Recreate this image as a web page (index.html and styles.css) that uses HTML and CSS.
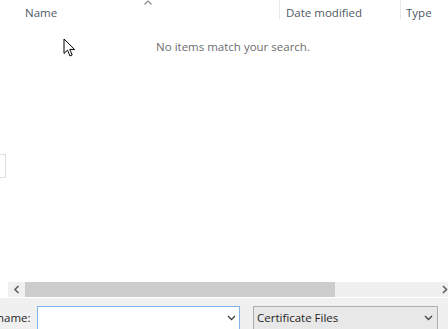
FILE: index.html
```html
<!DOCTYPE html>
<html>
<head>
<meta charset="utf-8">
<link rel="stylesheet" href="styles.css">
</head>
<body>
<div class="window">
  <div class="list">
    <div class="header">
      <div class="col col-name">Name<span class="sort"><svg width="8" height="5" viewBox="0 0 8 5"><path d="M0.5 4.5 L4 1 L7.5 4.5" fill="none" stroke="#8a8a8a" stroke-width="1.2"/></svg></span></div>
      <div class="col col-date">Date modified</div>
      <div class="col col-type">Type</div>
    </div>
    <div class="empty">No items match your search.</div>
    <div class="edge"></div>
    <div class="hscroll">
      <div class="arrow-left"><svg width="7" height="9" viewBox="0 0 7 9"><path d="M5.5 1 L2 4.5 L5.5 8" fill="none" stroke="#606060" stroke-width="1.6"/></svg></div>
      <div class="track"><div class="thumb"></div></div>
      <div class="arrow-right"><svg width="6" height="9" viewBox="0 0 6 9"><path d="M1 1 L4.5 4.5 L1 8" fill="none" stroke="#606060" stroke-width="1.6"/></svg></div>
    </div>
    <svg class="cursor" width="14" height="20" viewBox="0 0 14 20"><path d="M1 1 L1 15.5 L4.5 12.2 L7 18 L9.2 17 L6.8 11.4 L11.5 11.4 Z" fill="#fff" stroke="#000" stroke-width="1" stroke-linejoin="miter"/></svg>
  </div>
  <div class="bottom">
    <span class="label">name:</span>
    <div class="input"><span class="chev"><svg width="9" height="6" viewBox="0 0 9 6"><path d="M1 1 L4.5 4.5 L8 1" fill="none" stroke="#404040" stroke-width="1.3"/></svg></span></div>
    <div class="combo"><span class="combo-text">Certificate Files</span><span class="chev"><svg width="9" height="6" viewBox="0 0 9 6"><path d="M1 1 L4.5 4.5 L8 1" fill="none" stroke="#404040" stroke-width="1.3"/></svg></span></div>
  </div>
</div>
</body>
</html>
```
FILE: styles.css
```css
* { box-sizing: border-box; }
html, body { margin: 0; padding: 0; }
body {
  width: 448px;
  height: 329px;
  overflow: hidden;
  font-family: "Open Sans", "Noto Sans", "Liberation Sans", sans-serif;
  background: #fff;
}
.window {
  width: 448px;
  height: 329px;
  display: flex;
  flex-direction: column;
}
.list {
  position: relative;
  height: 298px;
  flex-shrink: 0;
  background: #fff;
  display: flex;
  flex-direction: column;
}
.header {
  display: flex;
  height: 27px;
  font-size: 11.5px;
  color: #4e5966;
}
.col {
  padding-top: 5px;
  line-height: 16px;
}
.col-name {
  position: relative;
  width: 279px;
  padding-left: 25px;
}
.sort {
  position: absolute;
  left: 144px;
  top: 0px;
  line-height: 0;
}
.col-date {
  width: 121px;
  padding-left: 6px;
  border-left: 1px solid #e8e8e8;
  height: 19px;
}
.col-type {
  flex: 1;
  padding-left: 5px;
  border-left: 1px solid #e8e8e8;
  height: 19px;
}
.empty {
  text-align: center;
  font-size: 11.5px;
  color: #6d6d6d;
  padding-left: 18px;
  margin-top: 12px;
  line-height: 16px;
}
.edge {
  margin-top: 99px;
  width: 6px;
  height: 24px;
  border: 1px solid #e0e0e0;
  border-left: none;
}
.hscroll {
  margin-top: auto;
  margin-bottom: 1px;
  margin-left: 8px;
  height: 15px;
  display: flex;
  background: #f0f0f0;
}
.arrow-left {
  width: 17px;
  display: flex;
  align-items: center;
  justify-content: center;
}
.track {
  flex: 1;
  display: flex;
}
.thumb {
  width: 310px;
  background: #cdcdcd;
}
.arrow-right {
  width: 10px;
  display: flex;
  align-items: center;
  justify-content: flex-end;
  overflow: hidden;
}
.cursor {
  position: absolute;
  left: 63px;
  top: 38px;
}
.bottom {
  flex: 1;
  overflow: hidden;
  background: #f0f0f0;
  display: flex;
  align-items: flex-start;
  padding-top: 8px;
  font-size: 11.5px;
  color: #1e1e1e;
}
.label {
  flex-shrink: 0;
  width: 40px;
  margin-left: -3px;
  padding-top: 4px;
  text-align: left;
}
.input {
  flex-shrink: 0;
  width: 203px;
  height: 26px;
  background: #fff;
  border: 1px solid #7eb4ea;
  display: flex;
  justify-content: flex-end;
  padding-right: 3px;
  padding-top: 8px;
}
.combo {
  flex-shrink: 0;
  margin-left: 13px;
  width: 185px;
  height: 26px;
  background: #e8e8e8;
  border: 1px solid #adadad;
  display: flex;
  justify-content: space-between;
  padding-left: 3px;
  padding-right: 4px;
}
.combo-text {
  padding-top: 3px;
}
.combo .chev {
  padding-top: 8px;
}
.chev { line-height: 0; }
```
